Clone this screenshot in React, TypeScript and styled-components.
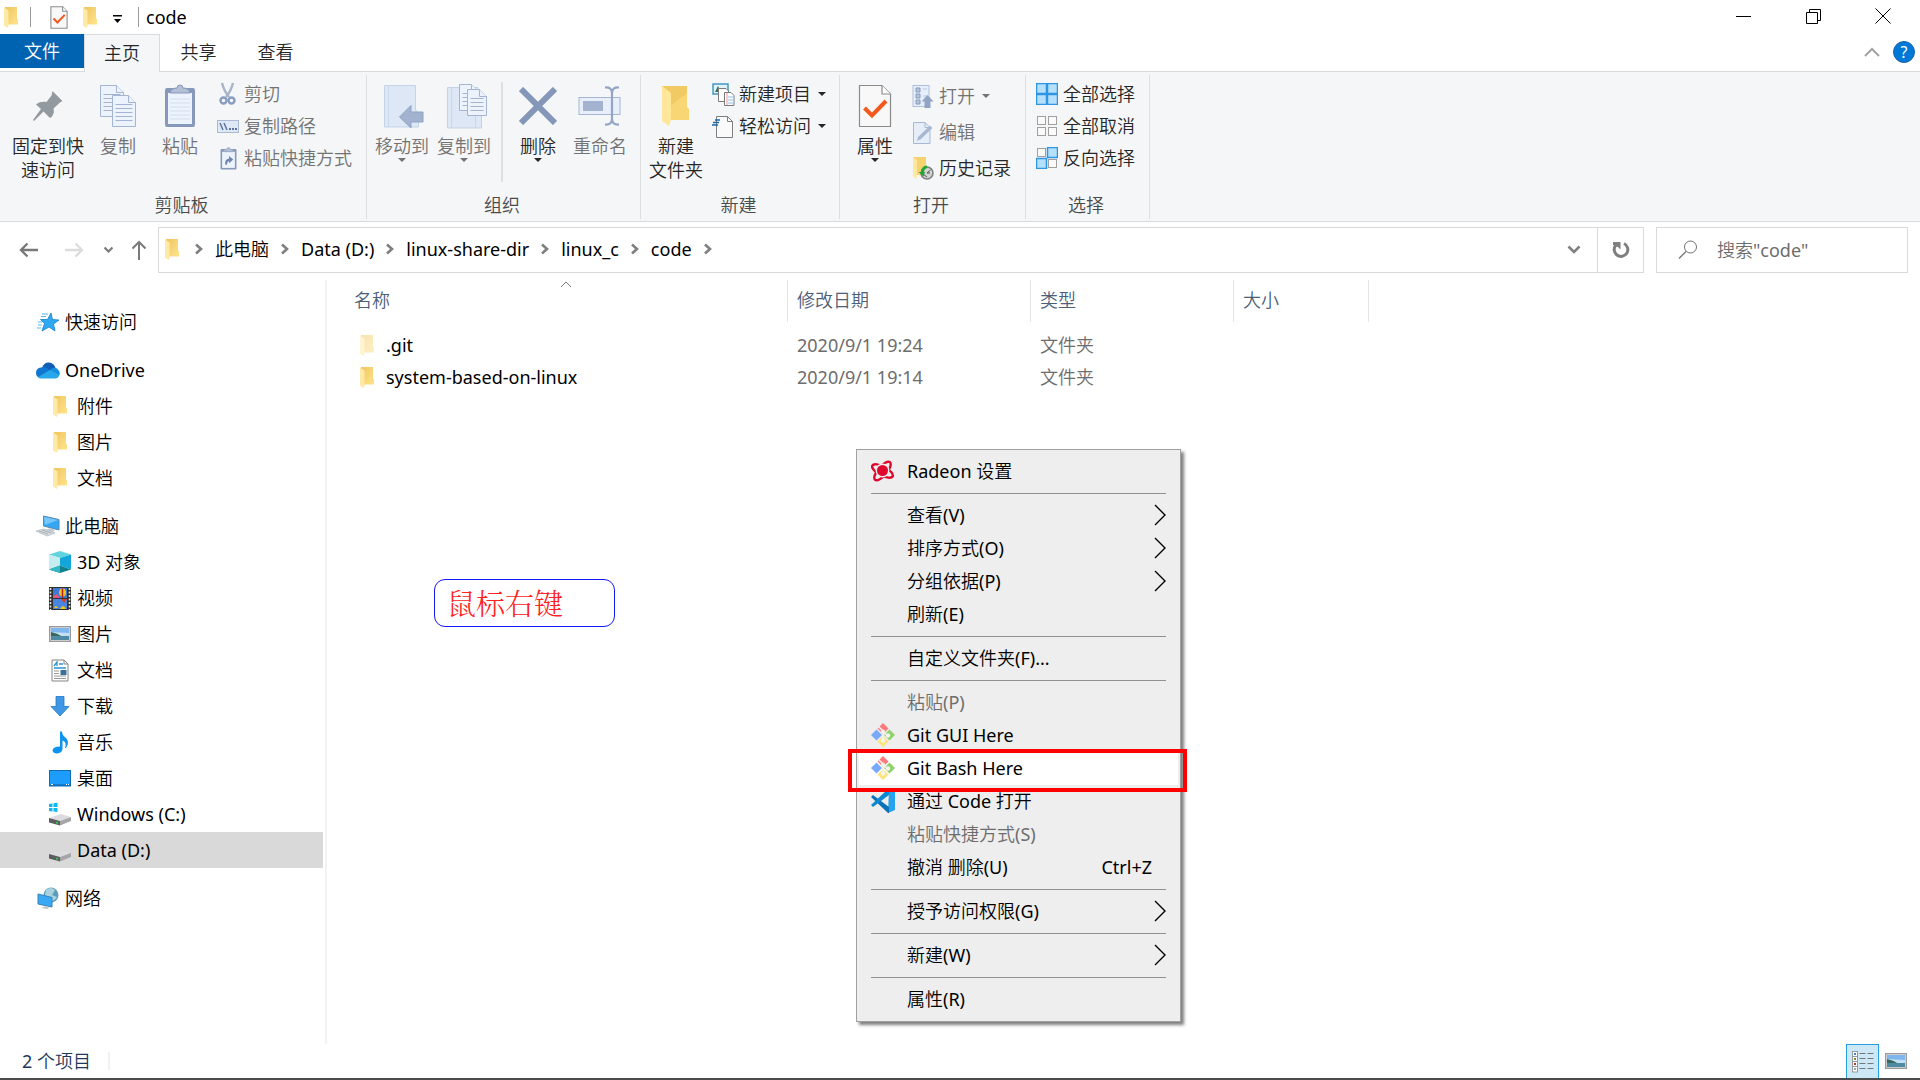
import React from "react";
import styled, { createGlobalStyle, css } from "styled-components";

const GlobalStyle = createGlobalStyle`
  *, *::before, *::after { box-sizing: border-box; }
  body {
    margin: 0;
    background: #fff;
    color: #000;
    font: 400 18px/24px "Noto Sans", "Noto Sans CJK SC DemiLight", "Noto Sans CJK SC Light", "Noto Sans CJK SC", sans-serif;
  }
  button, input {
    margin: 0;
    padding: 0;
    border: 0;
    background: none;
    color: inherit;
    font: inherit;
  }
  ul, ol { margin: 0; padding: 0; list-style: none; }
  a { color: inherit; text-decoration: none; }
  svg { display: block; flex: none; }
`;

/* ---------- layout ---------- */

const Window = styled.div`
  display: flex;
  flex-direction: column;
  min-height: 100vh;
  position: relative;
  border-bottom: 2px solid #4a4b4d;
`;

const TitleBar = styled.header`
  display: flex;
  align-items: center;
  height: 34px;
`;

const QuickTools = styled.div`
  display: flex;
  align-items: center;
  padding-left: 4px;
`;

const QuickButton = styled.button<{ $gap: number }>`
  display: flex;
  align-items: center;
  justify-content: center;
  margin-left: ${(p) => p.$gap}px;
`;

const TitleRule = styled.span<{ $gap: number }>`
  width: 1px;
  height: 20px;
  margin-left: ${(p) => p.$gap}px;
  background: #9a9a9a;
`;

const WindowTitle = styled.h1`
  margin: 0 0 0 7px;
  flex: 1;
  font-size: 18px;
  font-weight: 400;
  line-height: 24px;
`;

const WindowButtons = styled.div`
  display: flex;
  align-self: stretch;
  padding: 0 2px 2px 0;
`;

const WindowButton = styled.button`
  display: flex;
  align-items: center;
  justify-content: center;
  width: 70px;
`;

const TabBar = styled.nav`
  display: flex;
  height: 38px;
  border-bottom: 1px solid #d9dadb;
`;

const Tab = styled.button<{ $kind?: "file" | "active" }>`
  width: 77px;
  height: 36px;
  color: #262626;
  ${(p) =>
    p.$kind === "file" &&
    css`
      width: 84px;
      height: 34px;
      background: #0063b1;
      color: #fff;
    `}
  ${(p) =>
    p.$kind === "active" &&
    css`
      width: 76px;
      height: 38px;
      padding-bottom: 2px;
      border: 1px solid #d9dadb;
      border-bottom: 0;
      background: #f4f6f8;
    `}
`;

const TabTools = styled.div`
  display: flex;
  align-items: center;
  gap: 13px;
  margin-left: auto;
  padding: 0 5px 2px 0;
`;

const Help = styled.button`
  width: 22px;
  height: 22px;
  border: 1px solid #1563a8;
  border-radius: 50%;
  background: #0078d7;
  color: #fff;
  font-size: 16px;
  line-height: 20px;
`;

const Ribbon = styled.section`
  display: flex;
  height: 150px;
  padding: 3px 0 2px;
  border-bottom: 1px solid #d9dadb;
  background: #f4f6f8;
`;

const Group = styled.fieldset<{ $width: number }>`
  display: flex;
  flex-direction: column;
  width: ${(p) => p.$width}px;
  min-width: 0;
  margin: 0;
  padding: 0;
  border: 0;
  border-right: 1px solid #dddfe1;
`;

const GroupBody = styled.div<{ $start: number }>`
  display: flex;
  flex: 1;
  padding-left: ${(p) => p.$start}px;
`;

const GroupName = styled.div`
  height: 26px;
  padding-right: 3px;
  color: #4a4a4a;
  text-align: center;
`;

const BigButton = styled.button<{ $muted?: boolean; $wide?: boolean }>`
  display: flex;
  flex-direction: column;
  align-items: center;
  width: ${(p) => (p.$wide ? 78 : 62)}px;
  padding-top: 9px;
  color: ${(p) => (p.$muted ? "#737373" : "#262626")};
  white-space: pre-line;
`;

const BigIcon = styled.span`
  display: flex;
  align-items: center;
  justify-content: center;
  height: 44px;
  margin-bottom: 6px;
`;

const BigRule = styled.span`
  width: 2px;
  height: 100px;
  margin: 7px 4px 0 6px;
  background: #dddfe1;
`;

const Stack = styled.div<{ $gap: number }>`
  display: flex;
  flex-direction: column;
  padding: 3px 0 0 ${(p) => p.$gap}px;
`;

const SmallButton = styled.button<{ $muted?: boolean; $tall?: boolean }>`
  display: flex;
  align-items: center;
  gap: 4px;
  height: ${(p) => (p.$tall ? 36 : 32)}px;
  color: ${(p) => (p.$muted ? "#737373" : "#262626")};
  white-space: nowrap;
`;

const SmallIcon = styled.span`
  display: flex;
  align-items: center;
  justify-content: center;
  width: 24px;
`;

const Triangle = styled.span<{ $side?: boolean }>`
  width: 0;
  height: 0;
  margin-left: ${(p) => (p.$side ? 3 : 0)}px;
  border: 4px solid transparent;
  border-top-color: currentColor;
  border-bottom: 0;
`;

const NavRow = styled.div`
  display: flex;
  align-items: center;
  gap: 12px;
  padding: 5px 12px 0 0;
`;

const Arrows = styled.div`
  display: flex;
  align-items: center;
  width: 146px;
  padding-left: 19px;
`;

const ArrowButton = styled.button<{ $gap: number }>`
  margin-left: ${(p) => p.$gap}px;
`;

const AddressBar = styled.div`
  display: flex;
  flex: 1;
  height: 46px;
  border: 1px solid #d9d9d9;
`;

const Crumbs = styled.ol`
  display: flex;
  align-items: center;
  flex: 1;
  gap: 12px;
  padding: 0 0 2px 6px;
`;

const Crumb = styled.li<{ $root?: boolean }>`
  display: flex;
  align-items: center;
  gap: 12px;
  margin-right: ${(p) => (p.$root ? 4 : 0)}px;
`;

const AddressButton = styled.button<{ $ruled?: boolean }>`
  display: flex;
  align-items: center;
  justify-content: center;
  width: 46px;
  ${(p) => p.$ruled && "border-left: 1px solid #d9d9d9;"}
`;

const SearchBox = styled.label`
  display: flex;
  align-items: center;
  gap: 19px;
  width: 252px;
  height: 46px;
  padding: 0 8px 0 21px;
  border: 1px solid #d9d9d9;
`;

const SearchInput = styled.input`
  width: 100%;
  min-width: 0;
  outline: 0;
  &::placeholder { color: #6d6d6d; opacity: 1; }
`;

const Main = styled.main`
  display: flex;
  flex: 1;
  padding-top: 7px;
`;

const Sidebar = styled.nav`
  width: 327px;
  padding: 24px 2px 0 0;
  border-right: 2px solid #f3f3f3;
`;

const TreeSection = styled.ul`
  margin-bottom: 12px;
`;

const TreeLink = styled.a<{ $child?: boolean; $current?: boolean }>`
  display: flex;
  align-items: center;
  gap: 5px;
  height: 36px;
  padding-left: ${(p) => (p.$child ? 48 : 36)}px;
  background: ${(p) => (p.$current ? "#d9d9d9" : "transparent")};
`;

const TreeIcon = styled.span`
  display: flex;
  align-items: center;
  justify-content: center;
  width: 24px;
  height: 24px;
`;

const Files = styled.div`
  flex: 1;
`;

const FileTable = styled.table`
  width: 100%;
  border-collapse: separate;
  border-spacing: 0;
  table-layout: fixed;
`;

const HeadCell = styled.th<{ $width?: number; $first?: boolean }>`
  position: relative;
  width: ${(p) => (p.$width ? `${p.$width}px` : "auto")};
  height: 42px;
  padding: 0 0 2px ${(p) => (p.$first ? 27 : 9)}px;
  border-right: ${(p) => (p.$width ? "1px solid #e5e5e5" : "0")};
  color: #4c607a;
  font-weight: 400;
  text-align: left;
`;

const SortMark = styled.span`
  position: absolute;
  top: 0;
  left: 50%;
  margin-left: 3px;
`;

const Spacer = styled.tr`
  height: 7px;
`;

const Cell = styled.td`
  height: 32px;
  padding: 0 0 0 9px;
  color: #6d6d6d;
`;

const NameCell = styled(Cell)`
  padding-left: 33px;
  color: #000;
`;

const FileName = styled.span`
  display: flex;
  align-items: center;
  gap: 12px;
`;

const StatusBar = styled.footer`
  display: flex;
  align-items: center;
  height: 34px;
  padding-left: 22px;
  color: #1e395b;
`;

const StatusRule = styled.span`
  width: 2px;
  height: 18px;
  margin-left: 17px;
  background: #f1f1f1;
`;

const ViewButtons = styled.div`
  display: flex;
  align-items: center;
  height: 34px;
  margin-left: auto;
  padding-right: 13px;
`;

const ViewButton = styled.button<{ $on?: boolean }>`
  display: flex;
  align-items: center;
  justify-content: center;
  height: 34px;
  width: 33px;
  ${(p) =>
    p.$on
      ? "border: 1px solid #26a0da; border-bottom: 0; background: #cce8f6;"
      : "width: 28px; padding-left: 6px; justify-content: flex-start;"}
`;

/* ---------- overlays ---------- */

const Note = styled.aside`
  position: absolute;
  top: 579px;
  left: 434px;
  width: 181px;
  height: 48px;
  padding: 0 12px;
  border: 1px solid #1616f5;
  border-radius: 11px;
  color: #f22;
  font-size: 29px;
  font-weight: 300;
  line-height: 46px;
  font-family: "Noto Serif CJK SC", "Noto Sans CJK SC", serif;
`;

const Menu = styled.ul`
  position: absolute;
  top: 449px;
  left: 856px;
  width: 325px;
  padding: 5px 2px;
  border: 1px solid #a0a0a0;
  background: #eee;
  box-shadow: 3px 3px 3px rgba(0, 0, 0, 0.5);
`;

const MenuButton = styled.button<{ $muted?: boolean; $hot?: boolean }>`
  display: flex;
  align-items: center;
  width: 100%;
  height: 33px;
  padding: 0 12px 2px;
  background: ${(p) => (p.$hot ? "#fff" : "transparent")};
  color: ${(p) => (p.$muted ? "#6d6d6d" : "#000")};
  text-align: left;
`;

const MenuIcon = styled.span`
  width: 24px;
  margin-right: 12px;
`;

const MenuText = styled.span`
  flex: 1;
`;

const Shortcut = styled.span`
  margin-right: 14px;
`;

const MenuRule = styled.li`
  height: 1px;
  margin: 5px 12px;
  background: #919191;
`;

const RedFrame = styled.div`
  position: absolute;
  top: 749px;
  left: 848px;
  width: 339px;
  height: 43px;
  border: 4px solid #f00;
  pointer-events: none;
`;

/* ---------- icons ---------- */

const Folder = ({ pale }: { pale?: boolean }) => (
  <svg width="14" height="21" viewBox="0 0 14 21" opacity={pale ? 0.5 : 1}>
    <defs>
      <linearGradient id="folderBack" x1="0" x2="1" y1="0" y2="1">
        <stop offset="0" stopColor="#efc55f" />
        <stop offset="1" stopColor="#ffe48c" />
      </linearGradient>
    </defs>
    <path d="M1 0H13V11.500L14 12.500V17.500H4L1 14Z" fill="url(#folderBack)" />
    <path d="M0 0.500L4.500 3.500V19.500L3.500 21L0 18.500Z" fill="#ffe9a6" />
  </svg>
);

const CheckDoc = ({ big }: { big?: boolean }) => (
  <svg width={big ? 34 : 18} height={big ? 44 : 23} viewBox="0 0 34 44">
    <path d="M1.500 1.500H24L32.500 10V42.500H1.500Z" fill="#f8f8f8" stroke="#8a8a8a" strokeWidth={big ? 1.2 : 2} />
    <path d="M24 1.500V10H32.500" fill="#fff" stroke="#8a8a8a" strokeWidth={big ? 1.2 : 2} />
    <path d="M6.500 24L14 31.500L28 17" fill="none" stroke="#f4581c" strokeWidth="4" />
  </svg>
);

const Pin = () => (
  <svg width="32" height="32" viewBox="0 0 32 32">
    <path d="M20.500 1L30.500 11L28 12.500L21.500 18.500C22.500 22 21.500 26 18 28L11.500 21.500L2 31L1 30L9 19L4 14.500C7 12 11 11.500 14.500 12L19.500 5.500Z" fill="#939a9f" />
  </svg>
);

const Page = ({ x, y, w, h }: { x: number; y: number; w: number; h: number }) => (
  <g stroke="#a3b5d2" fill="#edf3fc">
    <path d={`M${x} ${y}H${x + w - 7}L${x + w} ${y + 7}V${y + h}H${x}Z`} />
    <path d={`M${x + w - 7} ${y}V${y + 7}H${x + w}`} />
    {[9, 13, 17, 21, 25].filter((n) => n < h - 2).map((n) => (
      <path key={n} d={`M${x + 3} ${y + n}H${x + w - 3}`} />
    ))}
  </g>
);

const CopyIcon = () => (
  <svg width="38" height="44" viewBox="0 0 38 44">
    <Page x={1.5} y={1.5} w={23} h={31} />
    <Page x={13.5} y={11.5} w={23} h={31} />
  </svg>
);

const Clipboard = ({ small }: { small?: boolean }) => (
  <svg width={small ? 17 : 32} height={small ? 23 : 44} viewBox="0 0 32 44" preserveAspectRatio="none">
    <rect x="1" y="4" width="30" height="39" rx="2" fill="#8799bb" />
    <rect x="4" y="9" width="24" height="31" fill="#edf3fc" />
    {small ? (
      <path d="M10 34Q8 24 17 22V17L25 24L17 31V27Q13 28 13 34Z" fill="#6f86af" />
    ) : (
      <path d="M6 15H26M6 19H26M6 23H26M6 27H26M6 31H26M6 35H26" stroke="#d3dfef" />
    )}
    <path d="M6 9Q7 4 13 4Q13 1 16 1Q19 1 19 4Q25 4 26 9Z" fill="#b2bfd5" stroke="#8799bb" />
  </svg>
);

const Scissors = () => (
  <svg width="18" height="24" viewBox="0 0 18 24" fill="none">
    <path d="M3 1Q5 9 10 15M14 1Q12 9 7 15" stroke="#a8b4c8" strokeWidth="2.400" />
    <circle cx="4.500" cy="18.500" r="3" stroke="#899dc1" strokeWidth="2.400" />
    <circle cx="12.500" cy="18.500" r="3" stroke="#899dc1" strokeWidth="2.400" />
  </svg>
);

const PathIcon = () => (
  <svg width="22" height="13" viewBox="0 0 22 13">
    <rect x="0.500" y="0.500" width="21" height="12" fill="#dfe8f5" stroke="#a9b9d4" />
    <path d="M3 3L6 10M7 3L10 10" stroke="#5c76a4" strokeWidth="1.500" />
    <path d="M12 9H14M15 9H17M18 9H20" stroke="#5c76a4" strokeWidth="2" />
  </svg>
);

const MoveTo = () => (
  <svg width="42" height="44" viewBox="2 0 42 44" overflow="visible">
    <path d="M5.500 1.500H36.500V26L39.500 29V43H5.500Z" fill="#dde7f5" stroke="#c5d3e8" />
    <path d="M9.500 2V43" stroke="#c9d8ec" />
    <path d="M20.500 33L32 21.500V28H44V38H32V44Z" fill="#a3b3cf" stroke="#8fa2c4" />
  </svg>
);

const CopyTo = () => (
  <svg width="42" height="46" viewBox="-3 0 42 46" overflow="visible">
    <path d="M1.500 4.500H32V31H35.500V45H1.500Z" fill="#dde7f5" stroke="#c5d3e8" />
    <path d="M5.500 5V45M29.500 30V45" stroke="#c9d8ec" />
    <Page x={13.5} y={1.5} w={19} h={26} />
    <Page x={21.5} y={6.5} w={19} h={26} />
  </svg>
);

const DeleteIcon = () => (
  <svg width="38" height="38" viewBox="0 0 38 38">
    <path d="M2 2L36 36M36 2L2 36" stroke="#8497b8" strokeWidth="6" />
  </svg>
);

const RenameIcon = () => (
  <svg width="44" height="40" viewBox="0 0 44 40" fill="none">
    <rect x="1" y="11.500" width="41" height="17" fill="#e8effa" stroke="#a5b5d2" />
    <rect x="5" y="15" width="20" height="10" fill="#a3b3cf" />
    <path d="M27 1.500Q34 1 34 7V33Q34 39 27 38.500M41 1.500Q34 1 34 7M34 33Q34 39 41 38.500" stroke="#94a5c4" strokeWidth="2.200" />
  </svg>
);

const BigFolder = () => (
  <svg width="30" height="42" viewBox="0 0 30 42">
    <path d="M1 1H26V22L28 24V35H8L1 30Z" fill="#f8d673" />
    <path d="M1 1H26V8L8 22V8Z" fill="#f1ca64" />
    <path d="M1 1L10 8V35L8 41L1 36Z" fill="#ffe699" />
  </svg>
);

const NewItem = () => (
  <svg width="23" height="23" viewBox="0 0 23 23">
    <rect x="1" y="1" width="15" height="10" fill="#dff3fb" stroke="#4796bf" strokeWidth="1.500" />
    <path d="M3 9L6 3L9 9Z" fill="#35725b" />
    <path d="M6.500 5.500H14L16.500 8V18.500H6.500Z" fill="#fff" stroke="#7b7b7b" />
    <path d="M12.500 9.500H19L22 12.500V22.500H12.500Z" fill="#fff" stroke="#7b7b7b" />
    <path d="M15 10V22" stroke="#e99" />
    <path d="M16 14H21M16 17H21M16 20H21" stroke="#8ebce8" />
  </svg>
);

const EasyAccess = () => (
  <svg width="22" height="23" viewBox="0 0 22 23">
    <path d="M4.500 1.500H15.500L20.500 6.500V22.500H4.500Z" fill="#fafafa" stroke="#7f7f7f" />
    <path d="M15.500 1.500V6.500H20.500" fill="none" stroke="#7f7f7f" />
    <path d="M3 5H8M1 7.500H7M0 10H6" stroke="#1b65a8" strokeWidth="1.300" />
  </svg>
);

const OpenIcon = () => (
  <svg width="22" height="24" viewBox="0 0 22 24">
    <rect x="1" y="1.500" width="16" height="21" fill="#e6eefa" stroke="#b1c0da" />
    <path d="M4 4H8V8H4ZM4 10H8V14H4ZM4 16H8V20H4Z" fill="#b8c6dd" stroke="#8699bb" />
    <path d="M11 5H15M11 12H15" stroke="#b8c6dd" />
    <path d="M15.500 11L21.500 17.500H18.500V24H12.500V17.500H9.500Z" fill="#92a4c4" />
  </svg>
);

const EditIcon = () => (
  <svg width="22" height="23" viewBox="0 0 22 23">
    <path d="M1.500 1.500H13L18 6.500V22.500H1.500Z" fill="#e6eefa" stroke="#a9b9d4" />
    <path d="M5 20L6 16L18 4.500L20.500 7L9 18Z" fill="#a8b8d3" />
    <path d="M13 1.500V6.500H18" fill="none" stroke="#a9b9d4" />
  </svg>
);

const HistoryIcon = () => (
  <svg width="22" height="23" viewBox="0 0 22 23">
    <path d="M1 0H14V18H5L1 15Z" fill="#f6d36e" />
    <path d="M1 0L5 3V19L4 22L1 19Z" fill="#ffe79e" />
    <circle cx="15" cy="16" r="6" fill="#d2d2d2" stroke="#7e7e7e" strokeWidth="1.500" />
    <path d="M15 16L18.500 13M15 16H18M11 17L15 20" stroke="#555" />
    <path d="M15 8.500Q9 9 9.500 15H6.500L11.500 19.500L13 15H12Q12 12 15 11Z" fill="#24a634" />
  </svg>
);

const SelectGrid = ({ on }: { on: number[] }) => (
  <svg width="22" height="22" viewBox="0 0 22 22">
    {[0, 1, 2, 3].map((n) => {
      const active = on.includes(n);
      const left = (n % 2) * 11;
      const top = n > 1 ? 11 : 0;
      const inset = active ? 0.5 : 1.5;
      return (
        <rect key={n} x={left + inset} y={top + inset} width={11 - inset * 2} height={11 - inset * 2}
          fill={active ? "#b5e0fb" : "#fafafa"} stroke={active ? "#2e95e2" : "#a0a0a0"} strokeWidth={active ? 1.5 : 1} />
      );
    })}
  </svg>
);

const Chevron = ({ dir = "right" }: { dir?: "right" | "down" }) => (
  <svg width={dir === "right" ? 8 : 14} height={dir === "right" ? 12 : 10} viewBox={dir === "right" ? "0 0 8 12" : "0 0 14 10"} fill="none" stroke="#7f7f7f" strokeWidth="2.600">
    <path d={dir === "right" ? "M1 1.500L6 6L1 10.500" : "M1.500 1.500L7 7L12.500 1.500"} />
  </svg>
);

const Line = ({ d, w, h, color = "#000", weight = 1 }: { d: string; w: number; h: number; color?: string; weight?: number }) => (
  <svg width={w} height={h} viewBox={`0 0 ${w} ${h}`} fill="none" stroke={color} strokeWidth={weight}>
    <path d={d} />
  </svg>
);

const Refresh = () => (
  <svg width="18" height="18" viewBox="0 0 18 18" fill="none">
    <path d="M12 2.500A6.800 6.800 0 1 1 4 4" stroke="#7f7f7f" strokeWidth="3" />
    <path d="M1 1H8.500V8.500L6 6L1 4Z" fill="#7f7f7f" />
  </svg>
);

const SearchIcon = () => (
  <svg width="20" height="20" viewBox="0 0 20 20" fill="none" stroke="#717171">
    <circle cx="12.500" cy="7" r="6" />
    <path d="M8 11.500L1 18.500" strokeWidth="1.300" />
  </svg>
);

const Star = () => (
  <svg width="22" height="20" viewBox="0 0 22 20">
    <path d="M14 1L15.500 7.500L22 8L16.500 12L18 19L12 15L5 19L7.500 11.500L3.500 7.500H10.500Z" fill="#2fa8f2" stroke="#1480c8" strokeWidth="0.800" />
    <path d="M5 2H11M4 4.500H9M1 10H5M1 13H5M0 16H4" stroke="#58b7ee" />
  </svg>
);

const Cloud = () => (
  <svg width="24" height="17" viewBox="0 0 24 17">
    <path d="M6 6Q8 0 13 0.500Q18 1 19.500 6L12 11Z" fill="#0f5fb8" />
    <path d="M5 5.500Q9 4 14 8L6 16Q0 16 0 11Q0 6 5 5.500Z" fill="#0f77d2" />
    <path d="M13 9Q17 4 21 6.500Q24 9 24 12L21 15Z" fill="#1490df" />
    <path d="M2 15L14 8L23.500 13Q22 16.500 19 16.500H5Q3 16.500 2 15Z" fill="#28a8ea" />
  </svg>
);

const Computer = () => (
  <svg width="24" height="22" viewBox="0 0 24 22">
    <path d="M7.500 1L23 4.500V15L7.500 11Z" fill="#33a6f5" stroke="#5b8aae" />
    <path d="M8 2L22 5L9 10Z" fill="#79c6fb" />
    <path d="M14 13L19 15L17 17L10 15Z" fill="#c3cbd2" />
    <path d="M0 16L8 14L19 18L11 21Z" fill="#d9dde1" stroke="#adb5bc" strokeWidth="0.700" />
    <path d="M3 16L12 19M6 15L15 18" stroke="#939ca4" strokeWidth="0.700" />
  </svg>
);

const Cube = () => (
  <svg width="22" height="22" viewBox="0 0 22 22">
    <path d="M11 0L22 3.500L11 7L0 3.500Z" fill="#5fd4de" />
    <path d="M0 3.500L11 7V14.500L0 18.500Z" fill="#c3edf1" />
    <path d="M11 7L22 3.500V18.500L11 14.500Z" fill="#12a7d8" />
    <path d="M0 18.500L11 14.500L22 18.500L11 22Z" fill="#10818c" />
    <path d="M0 18.500L11 14.500V22Z" fill="#31b9c6" />
  </svg>
);

const Film = () => (
  <svg width="22" height="23" viewBox="0 0 22 23">
    <rect width="22" height="23" fill="#2f2f2f" />
    <path d="M1.500 1V23M20.500 1V23" stroke="#e8e8e8" strokeWidth="1.600" strokeDasharray="2 1.500" />
    <rect x="4" y="1" width="14" height="10" fill="#3e79d6" />
    <rect x="4" y="12" width="14" height="10" fill="#4a86df" />
    <ellipse cx="13.500" cy="5.500" rx="3.500" ry="4" fill="#f3c21c" />
    <path d="M13.500 1.500V11" stroke="#b42323" strokeWidth="1.500" />
    <path d="M4 9L8 7L11 11H4Z" fill="#e2577e" />
    <path d="M12 12H18L15 16Z" fill="#da3c2b" />
    <path d="M5 21Q7 17 9 21M11 22Q14 16 17 22Z" fill="#f3c21c" />
  </svg>
);

const Picture = () => (
  <svg width="22" height="16" viewBox="0 0 22 16">
    <rect x="0.750" y="0.750" width="20.500" height="14.500" fill="#fff" stroke="#9b9b9b" strokeWidth="1.500" />
    <rect x="2" y="2" width="18" height="6" fill="#7fb6ee" />
    <path d="M2 6L20 7V14H2Z" fill="#c4dff3" />
    <path d="M2 6Q8 7 14 11H2Z" fill="#37695c" />
    <path d="M2 10H20V14H2Z" fill="#4f8aa3" />
  </svg>
);

const TextDoc = () => (
  <svg width="18" height="23" viewBox="0 0 18 23">
    <path d="M1 1H13L17 5V22H1Z" fill="#fff" stroke="#858585" />
    <path d="M13 1V5H17" fill="none" stroke="#858585" />
    <path d="M3 7L6 3V7M8 5H12M3 9H15" fill="none" stroke="#2b93d6" strokeWidth="1.300" />
    <path d="M3 12H8M3 14.500H8M3 17H15M3 19.500H15" stroke="#9a9a9a" />
    <rect x="9.500" y="11" width="6" height="5" fill="#3b6f96" />
  </svg>
);

const DownArrow = () => (
  <svg width="20" height="21" viewBox="0 0 20 21">
    <path d="M6 0.500H14V10.500H19L10 20L1 10.500H6Z" fill="#3f97e6" stroke="#2278c6" strokeWidth="0.800" />
  </svg>
);

const MusicNote = () => (
  <svg width="17" height="23" viewBox="0 0 17 23">
    <path d="M8 0.500H10Q10 4 14 7Q18 11 14 17H13Q15 11 10.500 9.500V18Q10 22 5 22.500Q1 22.500 0.500 19.500Q1 15.500 8 15.500Z" fill="#0e94ec" />
  </svg>
);

const Desktop = () => (
  <svg width="22" height="17" viewBox="0 0 22 17">
    <rect x="0.500" y="0.500" width="21" height="15.500" fill="#1d9dfb" stroke="#0d6cb5" />
    <path d="M1 15H21" stroke="#0a5a9c" />
    <path d="M2 14.500H4M17 14.500H18M19 14.500H20" stroke="#fff" />
  </svg>
);

const Drive = ({ system }: { system?: boolean }) => (
  <svg width="22" height="24" viewBox="0 0 22 24" overflow="visible">
    <path d="M0 16L12 12L22 15L11 19Z" fill="#dcdcde" />
    <path d="M0 16L11 19V23.500L0 20.500Z" fill="#5b5e61" />
    <path d="M11 19L22 15V19L11 23.500Z" fill="#a5a6a8" />
    <path d="M7 19.500L9 20V22L7 21.500Z" fill="#37c23d" />
    {system && <path d="M0 2L3.500 1.500V5H0ZM4.500 1.300L8.500 0.700V5H4.500ZM0 6H3.500V9.500L0 9ZM4.500 6H8.500V10L4.500 9.600Z" fill="#0db7f0" />}
  </svg>
);

const Network = () => (
  <svg width="22" height="23" viewBox="0 0 22 23">
    <circle cx="14" cy="8" r="7.500" fill="#5f9dbb" />
    <path d="M9 3Q14 -1 18 3L15 8L20 10Q16 16 12 13L8 8Z" fill="#a8d2df" />
    <path d="M1 7L15 10.500V20L1 17Z" fill="#37a9f5" stroke="#3581b8" />
    <path d="M9 19L12 20L11 22L4 21Z" fill="#c0c7cc" />
  </svg>
);

const Radeon = () => (
  <svg width="24" height="22" viewBox="0 0 24 22">
    <g fill="none" stroke="#e0062c" strokeWidth="2.400">
      <ellipse cx="11.500" cy="11" rx="11.500" ry="4.500" transform="rotate(28 11.500 11)" />
      <ellipse cx="11.500" cy="11" rx="11.500" ry="4.500" transform="rotate(-50 11.500 11)" />
    </g>
    <circle cx="11.500" cy="10.500" r="6.200" fill="#e0062c" stroke="#eee" strokeWidth="1.400" />
  </svg>
);

const GitIcon = () => (
  <svg width="24" height="24" viewBox="0 0 24 24">
    <path d="M12 0L17.500 5.500L12 11L6.500 5.500Z" fill="#ff7b7b" />
    <path d="M5.500 6.500L11 12L5.500 17.500L0 12Z" fill="#7aa9f7" />
    <path d="M18.500 6.500L24 12L18.500 17.500L13 12Z" fill="#8fd16b" />
    <path d="M12 13L17.500 18.500L12 24L6.500 18.500Z" fill="#ffe27a" />
    <path d="M7.500 3.500L12 8V17M12 9L17 13" fill="none" stroke="#f3f3f0" strokeWidth="1.500" />
    <circle cx="12" cy="17.500" r="2.200" fill="#f3f3f0" />
    <circle cx="17" cy="12.500" r="2.200" fill="#f3f3f0" />
    <circle cx="12" cy="8.500" r="2" fill="#f3f3f0" />
  </svg>
);

const CodeIcon = () => (
  <svg width="24" height="24" viewBox="0 0 24 24">
    <path d="M17 24L18 0L24 3V21Z" fill="#27a3ee" />
    <path d="M0 8L2 6L18 18V24H17Z" fill="#0b72ba" />
    <path d="M0 16L2 18L18 6V0H17Z" fill="#0f88d3" />
  </svg>
);

const DetailsView = () => (
  <svg width="22" height="22" viewBox="0 0 22 22">
    <rect x="0.500" y="0.500" width="5" height="20.500" fill="#fff" stroke="#999" />
    <path d="M1 5.500H5M1 10.500H5M1 15.500H5" stroke="#999" />
    <path d="M2 3H4" stroke="#3d85c9" strokeWidth="2" />
    <path d="M2 8H4" stroke="#758c28" strokeWidth="2" />
    <path d="M2 13H4" stroke="#c8332a" strokeWidth="2" />
    <path d="M2 18H4" stroke="#95a8a8" strokeWidth="2" />
    <path d="M7.500 2.500H13.500M15.500 2.500H21.500M7.500 7.500H13.500M15.500 7.500H21.500M7.500 12.500H13.500M15.500 12.500H21.500M7.500 17.500H13.500M15.500 17.500H21.500" stroke="#777" />
  </svg>
);

/* ---------- data ---------- */

type TreeEntry = { label: string; icon: React.ReactNode; child?: boolean; current?: boolean };

const tree: TreeEntry[][] = [
  [{ label: "快速访问", icon: <Star /> }],
  [
    { label: "OneDrive", icon: <Cloud /> },
    { label: "附件", icon: <Folder />, child: true },
    { label: "图片", icon: <Folder />, child: true },
    { label: "文档", icon: <Folder />, child: true },
  ],
  [
    { label: "此电脑", icon: <Computer /> },
    { label: "3D 对象", icon: <Cube />, child: true },
    { label: "视频", icon: <Film />, child: true },
    { label: "图片", icon: <Picture />, child: true },
    { label: "文档", icon: <TextDoc />, child: true },
    { label: "下载", icon: <DownArrow />, child: true },
    { label: "音乐", icon: <MusicNote />, child: true },
    { label: "桌面", icon: <Desktop />, child: true },
    { label: "Windows (C:)", icon: <Drive system />, child: true },
    { label: "Data (D:)", icon: <Drive />, child: true, current: true },
  ],
  [{ label: "网络", icon: <Network /> }],
];

const crumbs = ["此电脑", "Data (D:)", "linux-share-dir", "linux_c", "code"];

const files = [
  { name: ".git", date: "2020/9/1 19:24", type: "文件夹", hidden: true },
  { name: "system-based-on-linux", date: "2020/9/1 19:14", type: "文件夹" },
];

type MenuEntry = { label: string; icon?: React.ReactNode; sub?: boolean; muted?: boolean; hot?: boolean; keys?: string };

const menu: (MenuEntry | null)[] = [
  { label: "Radeon 设置", icon: <Radeon /> },
  null,
  { label: "查看(V)", sub: true },
  { label: "排序方式(O)", sub: true },
  { label: "分组依据(P)", sub: true },
  { label: "刷新(E)" },
  null,
  { label: "自定义文件夹(F)..." },
  null,
  { label: "粘贴(P)", muted: true },
  { label: "Git GUI Here", icon: <GitIcon /> },
  { label: "Git Bash Here", icon: <GitIcon />, hot: true },
  { label: "通过 Code 打开", icon: <CodeIcon /> },
  { label: "粘贴快捷方式(S)", muted: true },
  { label: "撤消 删除(U)", keys: "Ctrl+Z" },
  null,
  { label: "授予访问权限(G)", sub: true },
  null,
  { label: "新建(W)", sub: true },
  null,
  { label: "属性(R)" },
];

/* ---------- parts ---------- */

type BigProps = { icon: React.ReactNode; label: string; muted?: boolean; wide?: boolean; drop?: boolean };

const Big = ({ icon, label, muted, wide, drop }: BigProps) => (
  <BigButton $muted={muted} $wide={wide}>
    <BigIcon>{icon}</BigIcon>
    {label}
    {drop && <Triangle />}
  </BigButton>
);

type SmallProps = { icon: React.ReactNode; label: string; muted?: boolean; tall?: boolean; drop?: boolean };

const Small = ({ icon, label, muted, tall, drop }: SmallProps) => (
  <SmallButton $muted={muted} $tall={tall}>
    <SmallIcon>{icon}</SmallIcon>
    {label}
    {drop && <Triangle $side />}
  </SmallButton>
);

export default function App() {
  return (
    <Window>
      <GlobalStyle />
      <TitleBar>
        <QuickTools>
          <Folder />
          <TitleRule $gap={12} />
          <QuickButton $gap={19} aria-label="属性"><CheckDoc /></QuickButton>
          <QuickButton $gap={15} aria-label="新建文件夹"><Folder /></QuickButton>
          <QuickButton $gap={16} aria-label="自定义快速访问工具栏">
            <svg width="9" height="13" viewBox="0 0 9 13"><path d="M0 4H9V5.500H0ZM1 8H8L4.500 12Z" /></svg>
          </QuickButton>
          <TitleRule $gap={16} />
        </QuickTools>
        <WindowTitle>code</WindowTitle>
        <WindowButtons>
          <WindowButton aria-label="最小化"><Line w={15} h={15} d="M0 7.500H15" /></WindowButton>
          <WindowButton aria-label="还原"><Line w={15} h={15} d="M0.500 3.500H11.500V14.500H0.500ZM3.500 3.500V0.500H14.500V11.500H11.500" /></WindowButton>
          <WindowButton aria-label="关闭"><Line w={16} h={16} d="M0.500 0.500L15.500 15.500M15.500 0.500L0.500 15.500" /></WindowButton>
        </WindowButtons>
      </TitleBar>

      <TabBar>
        <Tab $kind="file">文件</Tab>
        <Tab $kind="active">主页</Tab>
        <Tab>共享</Tab>
        <Tab>查看</Tab>
        <TabTools>
          <button aria-label="折叠功能区"><Line w={16} h={10} d="M1 9L8 2L15 9" color="#a3a3a3" weight={2} /></button>
          <Help aria-label="帮助">?</Help>
        </TabTools>
      </TabBar>

      <Ribbon>
        <Group $width={367}>
          <GroupBody $start={9}>
            <Big wide icon={<Pin />} label={"固定到快\n速访问"} />
            <Big muted icon={<CopyIcon />} label="复制" />
            <Big muted icon={<Clipboard />} label="粘贴" />
            <Stack $gap={5}>
              <Small muted icon={<Scissors />} label="剪切" />
              <Small muted icon={<PathIcon />} label="复制路径" />
              <Small muted icon={<Clipboard small />} label="粘贴快捷方式" />
            </Stack>
          </GroupBody>
          <GroupName>剪贴板</GroupName>
        </Group>
        <Group $width={274}>
          <GroupBody $start={4}>
            <Big muted drop icon={<MoveTo />} label="移动到" />
            <Big muted drop icon={<CopyTo />} label="复制到" />
            <BigRule />
            <Big drop icon={<DeleteIcon />} label="删除" />
            <Big muted icon={<RenameIcon />} label="重命名" />
          </GroupBody>
          <GroupName>组织</GroupName>
        </Group>
        <Group $width={199}>
          <GroupBody $start={4}>
            <Big icon={<BigFolder />} label={"新建\n文件夹"} />
            <Stack $gap={4}>
              <Small drop icon={<NewItem />} label="新建项目" />
              <Small drop icon={<EasyAccess />} label="轻松访问" />
            </Stack>
          </GroupBody>
          <GroupName>新建</GroupName>
        </Group>
        <Group $width={186}>
          <GroupBody $start={4}>
            <Big drop icon={<CheckDoc big />} label="属性" />
            <Stack $gap={5}>
              <Small tall muted drop icon={<OpenIcon />} label="打开" />
              <Small tall muted icon={<EditIcon />} label="编辑" />
              <Small tall icon={<HistoryIcon />} label="历史记录" />
            </Stack>
          </GroupBody>
          <GroupName>打开</GroupName>
        </Group>
        <Group $width={124}>
          <GroupBody $start={4}>
            <Stack $gap={5}>
              <Small icon={<SelectGrid on={[0, 1, 2, 3]} />} label="全部选择" />
              <Small icon={<SelectGrid on={[]} />} label="全部取消" />
              <Small icon={<SelectGrid on={[1, 2]} />} label="反向选择" />
            </Stack>
          </GroupBody>
          <GroupName>选择</GroupName>
        </Group>
      </Ribbon>

      <NavRow>
        <Arrows>
          <ArrowButton $gap={0} aria-label="后退"><Line w={19} h={16} d="M19 8H2M8.500 1.500L2 8L8.500 14.500" color="#7a7a7a" weight={2.4} /></ArrowButton>
          <ArrowButton $gap={27} aria-label="前进"><Line w={19} h={16} d="M0 8H17M10.500 1.500L17 8L10.500 14.500" color="#dcdcdc" weight={2.4} /></ArrowButton>
          <ArrowButton $gap={20} aria-label="最近浏览的位置"><Line w={9} h={8} d="M0.500 1.500L4.500 5.500L8.500 1.500" color="#7a7a7a" weight={2.2} /></ArrowButton>
          <ArrowButton $gap={18} aria-label="上移"><Line w={16} h={20} d="M8 20V2M1.500 8.500L8 2L14.500 8.500" color="#7a7a7a" weight={2} /></ArrowButton>
        </Arrows>
        <AddressBar>
          <Crumbs>
            <Crumb $root><Folder /></Crumb>
            {crumbs.map((name) => (
              <Crumb key={name}><Chevron /><a href="#">{name}</a></Crumb>
            ))}
            <Crumb><Chevron /></Crumb>
          </Crumbs>
          <AddressButton aria-label="以前的位置"><Chevron dir="down" /></AddressButton>
          <AddressButton $ruled aria-label="刷新"><Refresh /></AddressButton>
        </AddressBar>
        <SearchBox>
          <SearchIcon />
          <SearchInput type="text" aria-label="搜索" placeholder={'搜索"code"'} />
        </SearchBox>
      </NavRow>

      <Main>
        <Sidebar>
          {tree.map((section, n) => (
            <TreeSection key={n}>
              {section.map((entry) => (
                <li key={entry.label}>
                  <TreeLink href="#" $child={entry.child} $current={entry.current}>
                    <TreeIcon>{entry.icon}</TreeIcon>
                    {entry.label}
                  </TreeLink>
                </li>
              ))}
            </TreeSection>
          ))}
        </Sidebar>
        <Files>
          <FileTable>
            <thead>
              <tr>
                <HeadCell $width={461} $first>
                  名称
                  <SortMark><Line w={12} h={8} d="M1 7L6 2L11 7" color="#777" /></SortMark>
                </HeadCell>
                <HeadCell $width={243}>修改日期</HeadCell>
                <HeadCell $width={203}>类型</HeadCell>
                <HeadCell $width={135}>大小</HeadCell>
                <HeadCell as="td" />
              </tr>
            </thead>
            <tbody>
              <Spacer />
              {files.map((file) => (
                <tr key={file.name}>
                  <NameCell><FileName><Folder pale={file.hidden} />{file.name}</FileName></NameCell>
                  <Cell>{file.date}</Cell>
                  <Cell>{file.type}</Cell>
                  <Cell />
                </tr>
              ))}
            </tbody>
          </FileTable>
        </Files>
      </Main>

      <StatusBar>
        2 个项目
        <StatusRule />
        <ViewButtons>
          <ViewButton $on aria-label="详细信息"><DetailsView /></ViewButton>
          <ViewButton aria-label="大缩略图"><Picture /></ViewButton>
        </ViewButtons>
      </StatusBar>

      <Note>鼠标右键</Note>

      <Menu>
        {menu.map((entry, n) =>
          entry ? (
            <li key={n}>
              <MenuButton $muted={entry.muted} $hot={entry.hot}>
                <MenuIcon>{entry.icon}</MenuIcon>
                <MenuText>{entry.label}</MenuText>
                {entry.keys && <Shortcut>{entry.keys}</Shortcut>}
                {entry.sub && <Line w={12} h={22} d="M1 1L11 11L1 21" weight={1.4} />}
              </MenuButton>
            </li>
          ) : (
            <MenuRule key={n} role="separator" />
          ),
        )}
      </Menu>
      <RedFrame />
    </Window>
  );
}
